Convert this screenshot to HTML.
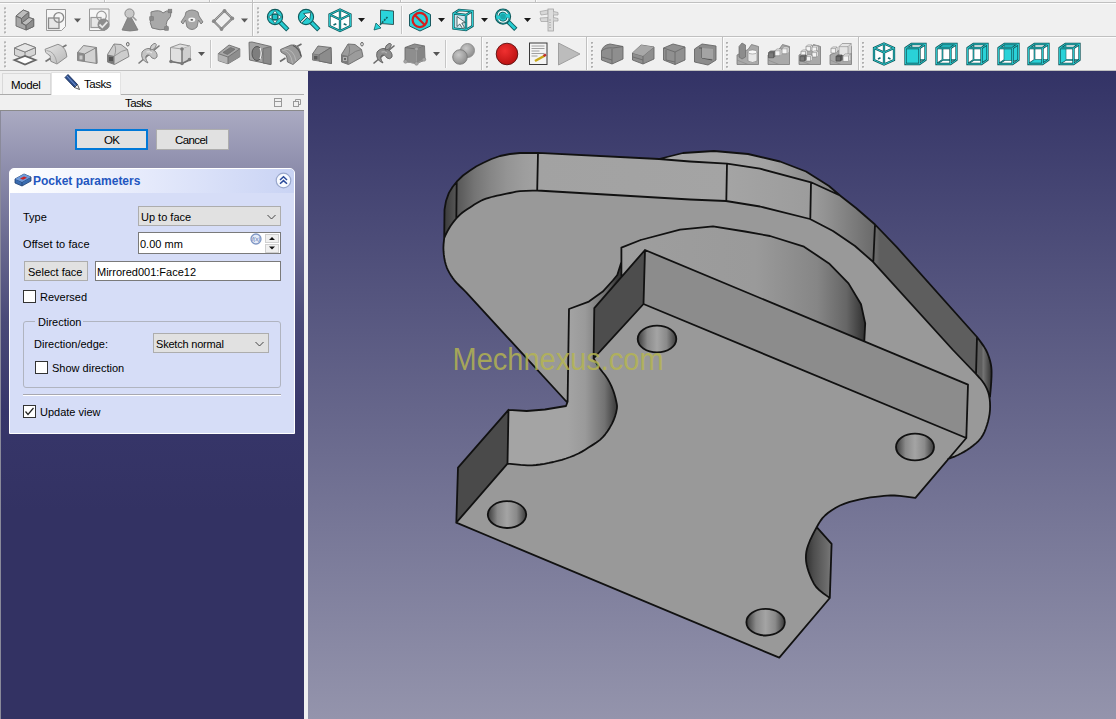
<!DOCTYPE html>
<html><head><meta charset="utf-8">
<style>
*{margin:0;padding:0;box-sizing:border-box}
html,body{width:1116px;height:719px;overflow:hidden;background:#f0f0f0;font-family:"Liberation Sans",sans-serif;font-size:11px;color:#000}
.a{position:absolute}
.hl{position:absolute;height:1px;background:#c4c4c4}
.vl{position:absolute;width:1px;background:#d0d0d0}
.grip{position:absolute;width:3px;background-image:radial-gradient(circle,#9a9a9a 0.8px,transparent 1px);background-size:3px 4px}
.t{position:absolute;white-space:nowrap;line-height:1}
.btn{position:absolute;background:#e1e1e1;border:1px solid #adadad}
.cb{position:absolute;width:13px;height:13px;border:1px solid #333;background:#fff}
</style></head><body>
<!-- toolbar rows -->
<!--TB--><div class="a" style="left:0;top:0;width:1116px;height:71px;background:#f0f0f0"></div><svg class="a" style="left:0;top:0" width="1116" height="71" viewBox="0 0 1116 71"><rect x="0" y="2" width="1116" height="1" fill="#c0c0c0"/><rect x="0" y="3" width="1116" height="1" fill="#fcfcfc"/><rect x="0" y="36" width="1116" height="1" fill="#c0c0c0"/><rect x="0" y="37" width="1116" height="1" fill="#fcfcfc"/><rect x="0" y="70" width="1116" height="1" fill="#c0c0c0"/><rect x="104" y="0" width="1" height="2" fill="#c0c0c0"/><rect x="105" y="0" width="1" height="2" fill="#fcfcfc"/><rect x="209" y="0" width="1" height="2" fill="#c0c0c0"/><rect x="210" y="0" width="1" height="2" fill="#fcfcfc"/><rect x="252" y="0" width="1" height="2" fill="#c0c0c0"/><rect x="253" y="0" width="1" height="2" fill="#fcfcfc"/><rect x="400" y="0" width="1" height="2" fill="#c0c0c0"/><rect x="401" y="0" width="1" height="2" fill="#fcfcfc"/><rect x="535" y="0" width="1" height="2" fill="#c0c0c0"/><rect x="536" y="0" width="1" height="2" fill="#fcfcfc"/><rect x="481" y="37" width="1" height="33" fill="#c0c0c0"/><rect x="482" y="38" width="1" height="32" fill="#fcfcfc"/><rect x="586" y="37" width="1" height="33" fill="#c0c0c0"/><rect x="587" y="38" width="1" height="32" fill="#fcfcfc"/><rect x="722" y="37" width="1" height="33" fill="#c0c0c0"/><rect x="723" y="38" width="1" height="32" fill="#fcfcfc"/><rect x="858" y="37" width="1" height="33" fill="#c0c0c0"/><rect x="859" y="38" width="1" height="32" fill="#fcfcfc"/><rect x="4" y="7.5" width="2" height="2" fill="#bcbcbc"/><rect x="4.5" y="7.5" width="1" height="1" fill="#a0a0a0"/><rect x="5.5" y="9.0" width="1" height="1" fill="#ffffff"/><rect x="4" y="11.5" width="2" height="2" fill="#bcbcbc"/><rect x="4.5" y="11.5" width="1" height="1" fill="#a0a0a0"/><rect x="5.5" y="13.0" width="1" height="1" fill="#ffffff"/><rect x="4" y="15.5" width="2" height="2" fill="#bcbcbc"/><rect x="4.5" y="15.5" width="1" height="1" fill="#a0a0a0"/><rect x="5.5" y="17.0" width="1" height="1" fill="#ffffff"/><rect x="4" y="19.5" width="2" height="2" fill="#bcbcbc"/><rect x="4.5" y="19.5" width="1" height="1" fill="#a0a0a0"/><rect x="5.5" y="21.0" width="1" height="1" fill="#ffffff"/><rect x="4" y="23.5" width="2" height="2" fill="#bcbcbc"/><rect x="4.5" y="23.5" width="1" height="1" fill="#a0a0a0"/><rect x="5.5" y="25.0" width="1" height="1" fill="#ffffff"/><rect x="4" y="27.5" width="2" height="2" fill="#bcbcbc"/><rect x="4.5" y="27.5" width="1" height="1" fill="#a0a0a0"/><rect x="5.5" y="29.0" width="1" height="1" fill="#ffffff"/><rect x="4" y="31.5" width="2" height="2" fill="#bcbcbc"/><rect x="4.5" y="31.5" width="1" height="1" fill="#a0a0a0"/><rect x="5.5" y="33.0" width="1" height="1" fill="#ffffff"/><rect x="4" y="41.5" width="2" height="2" fill="#bcbcbc"/><rect x="4.5" y="41.5" width="1" height="1" fill="#a0a0a0"/><rect x="5.5" y="43.0" width="1" height="1" fill="#ffffff"/><rect x="4" y="45.5" width="2" height="2" fill="#bcbcbc"/><rect x="4.5" y="45.5" width="1" height="1" fill="#a0a0a0"/><rect x="5.5" y="47.0" width="1" height="1" fill="#ffffff"/><rect x="4" y="49.5" width="2" height="2" fill="#bcbcbc"/><rect x="4.5" y="49.5" width="1" height="1" fill="#a0a0a0"/><rect x="5.5" y="51.0" width="1" height="1" fill="#ffffff"/><rect x="4" y="53.5" width="2" height="2" fill="#bcbcbc"/><rect x="4.5" y="53.5" width="1" height="1" fill="#a0a0a0"/><rect x="5.5" y="55.0" width="1" height="1" fill="#ffffff"/><rect x="4" y="57.5" width="2" height="2" fill="#bcbcbc"/><rect x="4.5" y="57.5" width="1" height="1" fill="#a0a0a0"/><rect x="5.5" y="59.0" width="1" height="1" fill="#ffffff"/><rect x="4" y="61.5" width="2" height="2" fill="#bcbcbc"/><rect x="4.5" y="61.5" width="1" height="1" fill="#a0a0a0"/><rect x="5.5" y="63.0" width="1" height="1" fill="#ffffff"/><rect x="4" y="65.5" width="2" height="2" fill="#bcbcbc"/><rect x="4.5" y="65.5" width="1" height="1" fill="#a0a0a0"/><rect x="5.5" y="67.0" width="1" height="1" fill="#ffffff"/><rect x="257" y="7.5" width="2" height="2" fill="#bcbcbc"/><rect x="257.5" y="7.5" width="1" height="1" fill="#a0a0a0"/><rect x="258.5" y="9.0" width="1" height="1" fill="#ffffff"/><rect x="257" y="11.5" width="2" height="2" fill="#bcbcbc"/><rect x="257.5" y="11.5" width="1" height="1" fill="#a0a0a0"/><rect x="258.5" y="13.0" width="1" height="1" fill="#ffffff"/><rect x="257" y="15.5" width="2" height="2" fill="#bcbcbc"/><rect x="257.5" y="15.5" width="1" height="1" fill="#a0a0a0"/><rect x="258.5" y="17.0" width="1" height="1" fill="#ffffff"/><rect x="257" y="19.5" width="2" height="2" fill="#bcbcbc"/><rect x="257.5" y="19.5" width="1" height="1" fill="#a0a0a0"/><rect x="258.5" y="21.0" width="1" height="1" fill="#ffffff"/><rect x="257" y="23.5" width="2" height="2" fill="#bcbcbc"/><rect x="257.5" y="23.5" width="1" height="1" fill="#a0a0a0"/><rect x="258.5" y="25.0" width="1" height="1" fill="#ffffff"/><rect x="257" y="27.5" width="2" height="2" fill="#bcbcbc"/><rect x="257.5" y="27.5" width="1" height="1" fill="#a0a0a0"/><rect x="258.5" y="29.0" width="1" height="1" fill="#ffffff"/><rect x="257" y="31.5" width="2" height="2" fill="#bcbcbc"/><rect x="257.5" y="31.5" width="1" height="1" fill="#a0a0a0"/><rect x="258.5" y="33.0" width="1" height="1" fill="#ffffff"/><rect x="486" y="42.0" width="2" height="2" fill="#bcbcbc"/><rect x="486.5" y="42.0" width="1" height="1" fill="#a0a0a0"/><rect x="487.5" y="43.5" width="1" height="1" fill="#ffffff"/><rect x="486" y="46.0" width="2" height="2" fill="#bcbcbc"/><rect x="486.5" y="46.0" width="1" height="1" fill="#a0a0a0"/><rect x="487.5" y="47.5" width="1" height="1" fill="#ffffff"/><rect x="486" y="50.0" width="2" height="2" fill="#bcbcbc"/><rect x="486.5" y="50.0" width="1" height="1" fill="#a0a0a0"/><rect x="487.5" y="51.5" width="1" height="1" fill="#ffffff"/><rect x="486" y="54.0" width="2" height="2" fill="#bcbcbc"/><rect x="486.5" y="54.0" width="1" height="1" fill="#a0a0a0"/><rect x="487.5" y="55.5" width="1" height="1" fill="#ffffff"/><rect x="486" y="58.0" width="2" height="2" fill="#bcbcbc"/><rect x="486.5" y="58.0" width="1" height="1" fill="#a0a0a0"/><rect x="487.5" y="59.5" width="1" height="1" fill="#ffffff"/><rect x="486" y="62.0" width="2" height="2" fill="#bcbcbc"/><rect x="486.5" y="62.0" width="1" height="1" fill="#a0a0a0"/><rect x="487.5" y="63.5" width="1" height="1" fill="#ffffff"/><rect x="486" y="66.0" width="2" height="2" fill="#bcbcbc"/><rect x="486.5" y="66.0" width="1" height="1" fill="#a0a0a0"/><rect x="487.5" y="67.5" width="1" height="1" fill="#ffffff"/><rect x="591" y="42.0" width="2" height="2" fill="#bcbcbc"/><rect x="591.5" y="42.0" width="1" height="1" fill="#a0a0a0"/><rect x="592.5" y="43.5" width="1" height="1" fill="#ffffff"/><rect x="591" y="46.0" width="2" height="2" fill="#bcbcbc"/><rect x="591.5" y="46.0" width="1" height="1" fill="#a0a0a0"/><rect x="592.5" y="47.5" width="1" height="1" fill="#ffffff"/><rect x="591" y="50.0" width="2" height="2" fill="#bcbcbc"/><rect x="591.5" y="50.0" width="1" height="1" fill="#a0a0a0"/><rect x="592.5" y="51.5" width="1" height="1" fill="#ffffff"/><rect x="591" y="54.0" width="2" height="2" fill="#bcbcbc"/><rect x="591.5" y="54.0" width="1" height="1" fill="#a0a0a0"/><rect x="592.5" y="55.5" width="1" height="1" fill="#ffffff"/><rect x="591" y="58.0" width="2" height="2" fill="#bcbcbc"/><rect x="591.5" y="58.0" width="1" height="1" fill="#a0a0a0"/><rect x="592.5" y="59.5" width="1" height="1" fill="#ffffff"/><rect x="591" y="62.0" width="2" height="2" fill="#bcbcbc"/><rect x="591.5" y="62.0" width="1" height="1" fill="#a0a0a0"/><rect x="592.5" y="63.5" width="1" height="1" fill="#ffffff"/><rect x="591" y="66.0" width="2" height="2" fill="#bcbcbc"/><rect x="591.5" y="66.0" width="1" height="1" fill="#a0a0a0"/><rect x="592.5" y="67.5" width="1" height="1" fill="#ffffff"/><rect x="726" y="42.0" width="2" height="2" fill="#bcbcbc"/><rect x="726.5" y="42.0" width="1" height="1" fill="#a0a0a0"/><rect x="727.5" y="43.5" width="1" height="1" fill="#ffffff"/><rect x="726" y="46.0" width="2" height="2" fill="#bcbcbc"/><rect x="726.5" y="46.0" width="1" height="1" fill="#a0a0a0"/><rect x="727.5" y="47.5" width="1" height="1" fill="#ffffff"/><rect x="726" y="50.0" width="2" height="2" fill="#bcbcbc"/><rect x="726.5" y="50.0" width="1" height="1" fill="#a0a0a0"/><rect x="727.5" y="51.5" width="1" height="1" fill="#ffffff"/><rect x="726" y="54.0" width="2" height="2" fill="#bcbcbc"/><rect x="726.5" y="54.0" width="1" height="1" fill="#a0a0a0"/><rect x="727.5" y="55.5" width="1" height="1" fill="#ffffff"/><rect x="726" y="58.0" width="2" height="2" fill="#bcbcbc"/><rect x="726.5" y="58.0" width="1" height="1" fill="#a0a0a0"/><rect x="727.5" y="59.5" width="1" height="1" fill="#ffffff"/><rect x="726" y="62.0" width="2" height="2" fill="#bcbcbc"/><rect x="726.5" y="62.0" width="1" height="1" fill="#a0a0a0"/><rect x="727.5" y="63.5" width="1" height="1" fill="#ffffff"/><rect x="726" y="66.0" width="2" height="2" fill="#bcbcbc"/><rect x="726.5" y="66.0" width="1" height="1" fill="#a0a0a0"/><rect x="727.5" y="67.5" width="1" height="1" fill="#ffffff"/><rect x="862" y="42.0" width="2" height="2" fill="#bcbcbc"/><rect x="862.5" y="42.0" width="1" height="1" fill="#a0a0a0"/><rect x="863.5" y="43.5" width="1" height="1" fill="#ffffff"/><rect x="862" y="46.0" width="2" height="2" fill="#bcbcbc"/><rect x="862.5" y="46.0" width="1" height="1" fill="#a0a0a0"/><rect x="863.5" y="47.5" width="1" height="1" fill="#ffffff"/><rect x="862" y="50.0" width="2" height="2" fill="#bcbcbc"/><rect x="862.5" y="50.0" width="1" height="1" fill="#a0a0a0"/><rect x="863.5" y="51.5" width="1" height="1" fill="#ffffff"/><rect x="862" y="54.0" width="2" height="2" fill="#bcbcbc"/><rect x="862.5" y="54.0" width="1" height="1" fill="#a0a0a0"/><rect x="863.5" y="55.5" width="1" height="1" fill="#ffffff"/><rect x="862" y="58.0" width="2" height="2" fill="#bcbcbc"/><rect x="862.5" y="58.0" width="1" height="1" fill="#a0a0a0"/><rect x="863.5" y="59.5" width="1" height="1" fill="#ffffff"/><rect x="862" y="62.0" width="2" height="2" fill="#bcbcbc"/><rect x="862.5" y="62.0" width="1" height="1" fill="#a0a0a0"/><rect x="863.5" y="63.5" width="1" height="1" fill="#ffffff"/><rect x="862" y="66.0" width="2" height="2" fill="#bcbcbc"/><rect x="862.5" y="66.0" width="1" height="1" fill="#a0a0a0"/><rect x="863.5" y="67.5" width="1" height="1" fill="#ffffff"/><rect x="252" y="3" width="1" height="33" fill="#c0c0c0"/><rect x="253" y="4" width="1" height="32" fill="#fcfcfc"/><rect x="401" y="6" width="1" height="28" fill="#c6c6c6"/><rect x="402" y="6" width="1" height="28" fill="#fbfbfb"/><rect x="210" y="40" width="1" height="28" fill="#c6c6c6"/><rect x="211" y="40" width="1" height="28" fill="#fbfbfb"/><rect x="445" y="40" width="1" height="28" fill="#c6c6c6"/><rect x="446" y="40" width="1" height="28" fill="#fbfbfb"/><g stroke="#6a6a6a" stroke-width="0.9" stroke-linejoin="round"><path d="M16,16 L23.2,10 L28.8,12.2 L28.8,17.5 L33.7,19 L33.7,26.5 L26,30 L16,26 Z" fill="#a6a6a6"/><path d="M16,16 L23.2,10 L28.8,12.2 L21.5,18.5 Z" fill="#bcbcbc"/><path d="M21.5,23 L28.8,17.5 L33.7,19 L26,25.5 Z" fill="#bcbcbc"/><path d="M21.5,18.5 L28.8,12.2 L28.8,17.5 L21.5,23 Z" fill="#8c8c8c"/><path d="M26,25.5 L33.7,19 L33.7,26.5 L26,30 Z" fill="#8e8e8e"/><path d="M16,16 L21.5,18.5 L21.5,23 L26,25.5 L26,30" fill="none"/></g><path d="M46.5,9.5 h19 v17 l-4,4 h-15 z" fill="#f6f6f6" stroke="#9a9a9a" stroke-width="1"/><rect x="48.5" y="18" width="10.5" height="10.5" fill="#e6e6e6" stroke="#8a8a8a" stroke-width="1.3"/><circle cx="58.8" cy="17.5" r="4.9" fill="none" stroke="#8a8a8a" stroke-width="1.3"/><path d="M74,18.5 h7 l-3.5,4 z" fill="#5a5a5a"/><path d="M89.5,9 h19.5 v17.5 l-4,4 h-15.5 z" fill="#f6f6f6" stroke="#9a9a9a" stroke-width="1"/><rect x="91" y="17.5" width="10" height="10" fill="#e6e6e6" stroke="#9a9a9a" stroke-width="1.2"/><circle cx="101.5" cy="16" r="4.8" fill="none" stroke="#9a9a9a" stroke-width="1.2"/><circle cx="103.5" cy="24.5" r="6" fill="#8e8e8e"/><path d="M99.5,24.5 l2.8,2.8 l5,-5.5" fill="none" stroke="#e8e8e8" stroke-width="1.8"/><path d="M122,30 Q130,32 138,30 L131,17 L128,17 Z" fill="#8a8a8a" stroke="#777" stroke-width="0.8"/><circle cx="129.5" cy="13.5" r="4.6" fill="#c8c8c8" stroke="#8a8a8a" stroke-width="1"/><path d="M132.5,16.5 L136.5,20.5" stroke="#9a9a9a" stroke-width="1.6"/><path d="M151,12 Q160,9 163,13 Q166,10 171,11 Q172,17 167,21 Q165,24 168,29 Q160,31 152,28 Q149,22 151,18 Z" fill="#a9a9a9" stroke="#7c7c7c" stroke-width="1"/><rect x="168.2" y="9.2" width="3.6" height="3.6" fill="#8a8a8a" stroke="#777" stroke-width="0.6"/><rect x="149.7" y="16.7" width="3.6" height="3.6" fill="#8a8a8a" stroke="#777" stroke-width="0.6"/><rect x="164.7" y="26.7" width="3.6" height="3.6" fill="#8a8a8a" stroke="#777" stroke-width="0.6"/><path d="M186,12 Q192,8 198,12 L199,16 L203,22 L201,24 L198.5,20 L197,27 Q192,32 187,27 L185.5,20 L183,24 L181,22 L185,16 Z" fill="#a8a8a8" stroke="#7a7a7a" stroke-width="0.9"/><ellipse cx="191.8" cy="19.8" rx="3.5" ry="2.2" fill="#f4f4f4"/><ellipse cx="191.8" cy="19.8" rx="1.4" ry="0.9" fill="#555"/><path d="M224.5,10.8 L232.3,18.4 L221.5,29 L213.8,21.2 Z" fill="none" stroke="#7a7a7a" stroke-width="2.2"/><path d="M224.5,10.8 L232.3,18.4 L221.5,29 L213.8,21.2 Z" fill="none" stroke="#e0e0e0" stroke-width="0.6"/><circle cx="224.5" cy="10.8" r="1.9" fill="#8a8a8a"/><circle cx="232.3" cy="18.4" r="1.9" fill="#8a8a8a"/><circle cx="221.5" cy="29" r="1.9" fill="#8a8a8a"/><circle cx="213.8" cy="21.2" r="1.9" fill="#8a8a8a"/><path d="M241,18.5 h7 l-3.5,4 z" fill="#5a5a5a"/><path d="M280,22 L287.8,29.8" stroke="#0f5a5c" stroke-width="4.6" stroke-linecap="butt"/><path d="M280,22 L287.2,29.2" stroke="#26cdd2" stroke-width="2.8" stroke-linecap="butt"/><circle cx="275" cy="17" r="7.6" fill="#26cdd2" stroke="#0f5a5c" stroke-width="1.1"/><path d="M275,10.5 L277.3,13.8 L272.7,13.8 Z M275,23.5 L277.3,20.2 L272.7,20.2 Z M268.5,17 L271.8,14.7 L271.8,19.3 Z M281.5,17 L278.2,14.7 L278.2,19.3 Z" fill="#fff" stroke="#0f4a4c" stroke-width="0.7" stroke-linejoin="round"/><rect x="272.6" y="14.6" width="4.8" height="4.8" fill="#22c4c8" stroke="#0f4a4c" stroke-width="0.7"/><path d="M311,22 L318.8,29.8" stroke="#0f5a5c" stroke-width="4.6" stroke-linecap="butt"/><path d="M311,22 L318.2,29.2" stroke="#26cdd2" stroke-width="2.8" stroke-linecap="butt"/><circle cx="306" cy="17" r="7.6" fill="#26cdd2" stroke="#0f5a5c" stroke-width="1.1"/><path d="M301.5,21.8 L307,16.3" stroke="#0f4a4c" stroke-width="2.6" stroke-linecap="round"/><path d="M301.5,21.8 L307,16.3" stroke="#fff" stroke-width="1.2" stroke-linecap="round"/><path d="M310.8,12.5 L303.6,13.6 L309.7,19.7 Z" fill="#fff" stroke="#0f4a4c" stroke-width="0.8" stroke-linejoin="round"/><path d="M340,9.5 L350.5,14.5 L350.5,26 L340,31 L329.5,26 L329.5,14.5 Z" fill="#fff"/><path d="M340,9.5 L350.5,14.5 L350.5,26 L340,31 L329.5,26 L329.5,14.5 Z M329.5,14.5 L340,19.5 L350.5,14.5 M340,10 L340,30.5" fill="none" stroke="#0f5558" stroke-width="2.3" stroke-linejoin="miter"/><path d="M340,9.5 L350.5,14.5 L350.5,26 L340,31 L329.5,26 L329.5,14.5 Z M329.5,14.5 L340,19.5 L350.5,14.5 M340,10 L340,30.5" fill="none" stroke="#2cd0d6" stroke-width="0.9" stroke-linejoin="miter"/><path d="M333.5,25 l2.8,-1.3 M343.7,23.7 l2.8,1.3" stroke="#136a6e" stroke-width="1.6"/><path d="M358,18 h7 l-3.5,4 z" fill="#1a1a1a"/><path d="M380.5,10 L393.5,11 L393.5,24.5 L380.5,23.5 Z" fill="#2ad4da" stroke="#2a4a4a" stroke-width="0.9"/><path d="M387.5,17 L378,27" stroke="#106060" stroke-width="1.6" stroke-dasharray="2,1"/><path d="M374,30 L376,23 L381,28 Z" fill="#2ad4da" stroke="#106060" stroke-width="0.8"/><path d="M420,9 L430.5,14.5 L430.5,26 L420,31 L409.5,26 L409.5,14.5 Z" fill="#2fd3da" stroke="#1a5a60" stroke-width="1"/><circle cx="419.8" cy="20" r="7.2" fill="none" stroke="#d81c1c" stroke-width="2.2"/><path d="M414.8,15 L424.8,25" stroke="#d81c1c" stroke-width="2.2"/><path d="M438,18 h7 l-3.5,4 z" fill="#1a1a1a"/><path d="M453.5,13.5 L459,10 L472.5,11 L472.5,26 L466,30 L453.5,28.5 Z" fill="#f4f4f4"/><path d="M455,15 L464.5,16 L464.5,28.5 L455,27.5 Z" fill="#cfe6f0"/><path d="M453.5,13.5 L459,10 L472.5,11 L472.5,26 L466,30 L453.5,28.5 Z M453.5,13.5 L466,15 L472.5,11 M466,15 L466,30" fill="none" stroke="#0f5558" stroke-width="2.4" stroke-linejoin="miter"/><path d="M453.5,13.5 L459,10 L472.5,11 L472.5,26 L466,30 L453.5,28.5 Z M453.5,13.5 L466,15 L472.5,11 M466,15 L466,30" fill="none" stroke="#2cd0d6" stroke-width="1.0" stroke-linejoin="miter"/><path d="M457,16.5 L457,26.5 L459.8,24 L462.5,28.5 L464.5,27.5 L461.8,23 L465.5,22.5 Z" fill="#f8f8f8" stroke="#2a4a4a" stroke-width="0.8"/><path d="M481,18 h7 l-3.5,4 z" fill="#1a1a1a"/><path d="M508,21.6 L515.8,29.400000000000002" stroke="#0f5a5c" stroke-width="4.6" stroke-linecap="butt"/><path d="M508,21.6 L515.2,28.8" stroke="#26cdd2" stroke-width="2.8" stroke-linecap="butt"/><circle cx="503" cy="16.6" r="7.6" fill="#26cdd2" stroke="#0f5a5c" stroke-width="1.1"/><path d="M498,15.5 A5,5 0 0 1 507.5,14" fill="none" stroke="#0f4a4c" stroke-width="2.6"/><path d="M498,15.5 A5,5 0 0 1 507.5,14" fill="none" stroke="#e8ffff" stroke-width="1.3"/><path d="M508,17.8 A5,5 0 0 1 498.5,19.2" fill="none" stroke="#0f4a4c" stroke-width="2.6"/><path d="M508,17.8 A5,5 0 0 1 498.5,19.2" fill="none" stroke="#e8ffff" stroke-width="1.3"/><circle cx="503" cy="16.6" r="2.8" fill="#1aa8ac"/><path d="M524,18 h7 l-3.5,4 z" fill="#1a1a1a"/><path d="M540,11.5 L548,10 L548,14 L541,15 Z M540,18 L548,17.5 L548,21.5 L541,21.5 Z" fill="#d8d8d8" stroke="#a8a8a8" stroke-width="0.8" stroke-linejoin="round"/><rect x="548" y="9" width="5.5" height="22" fill="#dcdcdc" stroke="#a4a4a4" stroke-width="0.8"/><path d="M553.5,11.5 L558,12.5 L558,15 L553.5,15 M553.5,17.5 L558,18.5 L558,21 L553.5,21" fill="#d8d8d8" stroke="#a8a8a8" stroke-width="0.8"/><path d="M549,20 h2 M549,22.5 h2 M549,25 h2 M549,27.5 h2" stroke="#999" stroke-width="0.6"/><path d="M14.5,48 L25,43.5 L35.5,47.5 L35.5,54.5 L25,59 L14.5,55 Z" fill="#d6d6d6" stroke="#7a7a7a" stroke-width="0.9"/><path d="M14.5,48 L25,52 L35.5,47.5 M25,52 L25,59" fill="none" stroke="#7a7a7a" stroke-width="0.9"/><path d="M14.5,48 L25,43.5 L35.5,47.5 L25,52 Z" fill="#e6e6e6" stroke="#7a7a7a" stroke-width="0.9"/><path d="M14.5,60 L25,56 L35.5,60 L25,64.5 Z" fill="#ffffff" stroke="#666" stroke-width="1.8"/><defs><linearGradient id="gr1" x1="0" y1="0" x2="1" y2="1"><stop offset="0" stop-color="#e6e6e6"/><stop offset="1" stop-color="#b8b8b8"/></linearGradient></defs><path d="M45.5,61.5 L51,58 M62,47.5 L66.5,45" stroke="#777" stroke-width="1.8"/><path d="M45,49.3 L57.9,44.3 Q64,46 66,52.3 L66.9,56.8 L57,64 L50.8,61.3 Q50,57 50.3,55.9 Q47,54 45.8,52.3 Z" fill="url(#gr1)" stroke="#858585" stroke-width="0.9" stroke-linejoin="round"/><path d="M46.5,50.5 Q55,51 57,63.5" fill="none" stroke="#999" stroke-width="0.8"/><path d="M77.5,52.5 L83.5,45.5 L96.5,47.5 L97,63.5 L84.5,61.5 L77.5,60.5 Z" fill="#d2d2d2" stroke="#7c7c7c" stroke-width="0.9" stroke-linejoin="round"/><path d="M77.5,52.5 L84.5,54 L96.5,47.5 M84.5,54 L84.5,61.5" fill="none" stroke="#7c7c7c" stroke-width="0.9"/><path d="M77.5,52.5 L84.5,54 L84.5,61.5 L77.5,60.5 Z" fill="#8a8a8a"/><rect x="79.5" y="55.5" width="3" height="4" fill="#c8c8c8"/><path d="M96,47.5 L96.5,63" stroke="#888" stroke-width="1.8"/><path d="M107.5,54.5 L114,44 L121,44.5 L127.5,49.5 L129,56.5 L114.5,64.5 L107.5,62 Z" fill="#cdcdcd" stroke="#7c7c7c" stroke-width="0.9" stroke-linejoin="round"/><path d="M107.5,54.5 L114.5,56 L114.5,64.5 L107.5,62 Z" fill="#7a7a7a"/><rect x="109" y="57" width="4" height="4" fill="#555"/><path d="M114.5,56 Q117,48 114,44 M114.5,56 Q122,50 127.5,49.5" fill="none" stroke="#8a8a8a" stroke-width="0.8"/><ellipse cx="127.8" cy="44.2" rx="1.3" ry="1.8" fill="none" stroke="#555" stroke-width="0.9"/><path d="M138.5,63.5 L159.5,45.5" stroke="#7a7a7a" stroke-width="1.6"/><path d="M148,63 Q140,60 142,52 Q146,47 152,49 Q158,52 157,57 Q155,60 152,58 Q150,54 147,55 Q144,57 148,63 Z" fill="#c4c4c4" stroke="#7a7a7a" stroke-width="0.9"/><path d="M150,50 Q150,45 154,43.5 Q158,43 155,48 Q153,50 150,50 Z" fill="#cfcfcf" stroke="#7a7a7a" stroke-width="0.9"/><path d="M146.5,52 Q150,51 152,53" fill="none" stroke="#eee" stroke-width="1"/><path d="M170.5,47.5 L180,44 L190,46 L190.5,60 L182,63.5 L170.5,61.5 Z" fill="#e0e0e0" stroke="#8a8a8a" stroke-width="0.9" stroke-linejoin="round"/><path d="M170.5,47.5 L182,49 L190,46" fill="none" stroke="#9a9a9a" stroke-width="0.9"/><path d="M182,49 L190,46 L190.5,60 L182,63.5 Z" fill="#d0d0d0"/><path d="M182,49 L182,63.5 L170.5,61.5 M182,63.5 L190,59.5" fill="none" stroke="#707070" stroke-width="1.4"/><circle cx="182" cy="49" r="1.8" fill="#7a7a7a"/><circle cx="182" cy="63.5" r="1.8" fill="#7a7a7a"/><circle cx="171" cy="61.5" r="1.8" fill="#7a7a7a"/><circle cx="189.5" cy="59.5" r="1.8" fill="#7a7a7a"/><path d="M198,52 h7 l-3.5,4 z" fill="#555"/><path d="M218.3,53.6 L229,45 L239.8,48.8 L239.8,56.8 L228,63.8 L218.3,60.6 Z" fill="#a8a8a8" stroke="#6e6e6e" stroke-width="0.9" stroke-linejoin="round"/><path d="M218.3,53.6 L228,57 L228,63.8 L218.3,60.6 Z" fill="#b4b4b4"/><path d="M228,57 L239.8,48.8 L239.8,56.8 L228,63.8 Z" fill="#8e8e8e"/><path d="M218.3,53.6 L228,57 L239.8,48.8 M228,57 L228,63.8" fill="none" stroke="#6e6e6e" stroke-width="0.9"/><path d="M223,52.5 L230.5,47.5 L235,49.2 L227.5,54.5 Z" fill="#7a7a7a" stroke="#6e6e6e" stroke-width="0.8"/><path d="M249,42.3 L252,42 L271,46.5 L271,64.5 L249.5,60 Z" fill="#a4a4a4" stroke="#6a6a6a" stroke-width="0.9" stroke-linejoin="round"/><path d="M263,48.5 L271,46.5 L271,64.5 L263,63 Z" fill="#8a8a8a" stroke="#6a6a6a" stroke-width="0.8"/><ellipse cx="257" cy="53.5" rx="5" ry="7" fill="#7e7e7e" stroke="#555" stroke-width="1"/><path d="M260,48 Q262.5,53 260,59" fill="none" stroke="#f0f0f0" stroke-width="1.3"/><path d="M280,61.5 L285.5,58 M297,46.5 L301.5,44" stroke="#6a6a6a" stroke-width="1.6"/><path d="M280.5,49.5 L291,45 Q298,44 300,51 L301.5,57 L293,64.5 L287.5,62 Q287,57 286,55 Q282,53 281,52 Z" fill="#9a9a9a" stroke="#6a6a6a" stroke-width="0.9" stroke-linejoin="round"/><path d="M282,50 Q291,51 292.5,63.5 M284,49 Q294,49 296,61" fill="none" stroke="#bdbdbd" stroke-width="0.8"/><path d="M293,45.5 Q299,48 301,56" fill="none" stroke="#555" stroke-width="1.2"/><path d="M312.5,54 L318,46 L331,47.5 L331.5,63.5 L319,61 L312.5,60 Z" fill="#a0a0a0" stroke="#6a6a6a" stroke-width="0.9" stroke-linejoin="round"/><path d="M312.5,54 L319,55 L331,47.5 M319,55 L319,61" fill="none" stroke="#6a6a6a" stroke-width="0.9"/><path d="M312.5,54 L319,55 L319,61 L312.5,60 Z" fill="#8a8a8a"/><rect x="314" y="56" width="3.5" height="3.5" fill="#5a5a5a"/><path d="M319,55 L331,47.5 L331.5,63.5 L319,61 Z" fill="#8c8c8c" stroke="#6a6a6a" stroke-width="0.8"/><path d="M341.5,54.5 L348,44 L355,44.5 L361.5,49.5 L363,56.5 L348.5,64.5 L341.5,62 Z" fill="#9c9c9c" stroke="#6a6a6a" stroke-width="0.9" stroke-linejoin="round"/><path d="M341.5,54.5 L348.5,56 L348.5,64.5 L341.5,62 Z" fill="#7a7a7a"/><rect x="343" y="57" width="4" height="4" fill="#b0b0b0"/><rect x="344" y="58" width="2" height="2" fill="#666"/><path d="M348.5,56 Q351,48 348,44 M348.5,56 Q356,50 361.5,49.5" fill="none" stroke="#777" stroke-width="0.8"/><ellipse cx="362" cy="44.2" rx="1.3" ry="1.8" fill="none" stroke="#555" stroke-width="0.9"/><path d="M373.5,63.5 L394.5,45.5" stroke="#6a6a6a" stroke-width="1.6"/><path d="M383,63 Q375,60 377,52 Q381,47 387,49 Q393,52 392,57 Q390,60 387,58 Q385,54 382,55 Q379,57 383,63 Z" fill="#8e8e8e" stroke="#5e5e5e" stroke-width="0.9"/><path d="M385,50 Q385,45 389,43.5 Q393,43 390,48 Q388,50 385,50 Z" fill="#9a9a9a" stroke="#5e5e5e" stroke-width="0.9"/><path d="M381.5,52 Q385,51 387,53" fill="none" stroke="#bbb" stroke-width="1"/><path d="M405,47.5 L414.5,44 L424.5,46 L425,60 L416.5,63.5 L405,61.5 Z" fill="#8e8e8e" stroke="#6a6a6a" stroke-width="0.9" stroke-linejoin="round"/><path d="M405,47.5 L416.5,49 L424.5,46" fill="none" stroke="#6a6a6a" stroke-width="0.9"/><path d="M416.5,49 L424.5,46 L425,60 L416.5,63.5 Z" fill="#858585"/><path d="M416.5,49 L416.5,63.5 L405,61.5 M416.5,63.5 L424.5,59.5" fill="none" stroke="#9a9a9a" stroke-width="1.1"/><circle cx="416.5" cy="49" r="1.8" fill="#a6a6a6" stroke="#808080" stroke-width="0.5"/><circle cx="416.5" cy="63.5" r="1.8" fill="#a6a6a6" stroke="#808080" stroke-width="0.5"/><circle cx="405.5" cy="61.5" r="1.8" fill="#a6a6a6" stroke="#808080" stroke-width="0.5"/><circle cx="424" cy="59.5" r="1.8" fill="#a6a6a6" stroke="#808080" stroke-width="0.5"/><path d="M433,52 h7 l-3.5,4 z" fill="#555"/><defs><radialGradient id="gsph" cx="0.4" cy="0.35" r="0.7"><stop offset="0" stop-color="#c8c8c8"/><stop offset="1" stop-color="#8a8a8a"/></radialGradient></defs><circle cx="467.5" cy="50.5" r="7" fill="url(#gsph)" stroke="#8a8a8a" stroke-width="0.9"/><circle cx="460" cy="57" r="7.3" fill="url(#gsph)" stroke="#7a7a7a" stroke-width="0.9"/><defs><radialGradient id="rg" cx="0.4" cy="0.35" r="0.7"><stop offset="0" stop-color="#f03030"/><stop offset="1" stop-color="#b81010"/></radialGradient></defs><circle cx="507" cy="54" r="10.8" fill="url(#rg)" stroke="#5a1010" stroke-width="0.9"/><rect x="529.5" y="43" width="17.5" height="21.5" fill="#f4f4f4" stroke="#3a3a3a" stroke-width="1"/><path d="M531.5,46 h13 M531.5,48.5 h13 M531.5,51 h8 M531.5,53.5 h13 M531.5,56 h6" stroke="#8a8a8a" stroke-width="0.8"/><path d="M535,61 L545,55.5" stroke="#c8a818" stroke-width="2.5"/><path d="M543.5,56 L546,54.5" stroke="#c03030" stroke-width="2.5"/><path d="M558.5,43 L580,54 L558.5,65 Z" fill="#bcbcbc" stroke="#9a9a9a" stroke-width="0.9"/><path d="M601.5,51 Q603,45 610,44 L623,46.5 L623,59 L612,64 L601.5,60 Z" fill="#8e8e8e" stroke="#666" stroke-width="0.9"/><path d="M601.5,51 Q606,47 613,48 L623,46.5 M612,49 L612,64 M602,57 L612,60" fill="none" stroke="#666" stroke-width="0.8"/><path d="M632.5,53 L641,45 L654,47 L654,59 L643,64 L632.5,60 Z" fill="#8e8e8e" stroke="#666" stroke-width="0.9"/><path d="M632.5,53 L643,56 L654,47 M643,56 L643,64 M633,57 L643,60" fill="none" stroke="#666" stroke-width="0.8"/><path d="M632.5,53 L641,45 L654,47 L643,56 Z" fill="#a8a8a8"/><path d="M663.5,48 L673,44 L685,47 L685,60 L675,64.5 L663.5,60 Z" fill="#909090" stroke="#666" stroke-width="0.9"/><path d="M663.5,48 L675,52 L685,47 M675,52 L675,64.5 M666,50 L666,60 M666,60 L675,62" fill="none" stroke="#666" stroke-width="0.8"/><path d="M694.5,49 L702,44 L716,46 L716,60 L708,65 L694.5,62 Z" fill="#8c8c8c" stroke="#666" stroke-width="0.9"/><path d="M699,48 L702,48 L702,58 L712,60" fill="none" stroke="#555" stroke-width="1"/><path d="M702,48 L713,49 L713,59 L702,58Z" fill="#a4a4a4"/><path d="M737,55 L748,49.5 L751.5,44.5 L758.5,46.5 L758.5,64.5 L737,64.5 Z" fill="#a9a9a9" stroke="#7a7a7a" stroke-width="0.8" stroke-linejoin="round"/><path d="M737,60 L748,64.5" stroke="#8a8a8a" stroke-width="0.7"/><path d="M739,46.5 L742,43 L745.5,45 L745.5,57 L742,59 L739,57 Z" fill="#8c8c8c" stroke="#6a6a6a" stroke-width="0.7"/><path d="M748,52 Q752.5,48.5 757,52 L757,61 Q752.5,64 748,61 Z" fill="#e8e8e8" stroke="#888" stroke-width="0.7"/><ellipse cx="752.5" cy="52" rx="4.5" ry="2" fill="#f8f8f8" stroke="#888" stroke-width="0.6"/><path d="M768,55 L779,49.5 L782.5,44.5 L789.5,46.5 L789.5,64.5 L768,64.5 Z" fill="#a9a9a9" stroke="#7a7a7a" stroke-width="0.8" stroke-linejoin="round"/><path d="M768,60 L779,64.5" stroke="#8a8a8a" stroke-width="0.7"/><path d="M768.5,52.75 L770.25,51 L775.25,51 L775.25,56 L773.5,57.75 L768.5,57.75 Z" fill="#7a7a7a" stroke="#555" stroke-width="0.7"/><path d="M773.5,52.75 L775.25,51 L775.25,56 L773.5,57.75 Z" fill="#666"/><path d="M768.5,52.75 L773.5,52.75 L775.25,51 M773.5,52.75 L773.5,57.75" fill="none" stroke="#555" stroke-width="0.6"/><path d="M775,50.75 L776.75,49 L781.75,49 L781.75,54 L780,55.75 L775,55.75 Z" fill="#f4f4f4" stroke="#888" stroke-width="0.7"/><path d="M780,50.75 L781.75,49 L781.75,54 L780,55.75 Z" fill="#d8d8d8"/><path d="M775,50.75 L780,50.75 L781.75,49 M780,50.75 L780,55.75" fill="none" stroke="#888" stroke-width="0.6"/><path d="M782,48.75 L783.75,47 L788.75,47 L788.75,52 L787,53.75 L782,53.75 Z" fill="#f4f4f4" stroke="#888" stroke-width="0.7"/><path d="M787,48.75 L788.75,47 L788.75,52 L787,53.75 Z" fill="#d8d8d8"/><path d="M782,48.75 L787,48.75 L788.75,47 M787,48.75 L787,53.75" fill="none" stroke="#888" stroke-width="0.6"/><path d="M799,55 L810,49.5 L813.5,44.5 L820.5,46.5 L820.5,64.5 L799,64.5 Z" fill="#a9a9a9" stroke="#7a7a7a" stroke-width="0.8" stroke-linejoin="round"/><path d="M799,60 L810,64.5" stroke="#8a8a8a" stroke-width="0.7"/><path d="M806,46.575 L807.575,45 L812.075,45 L812.075,49.5 L810.5,51.075 L806,51.075 Z" fill="#f4f4f4" stroke="#888" stroke-width="0.7"/><path d="M810.5,46.575 L812.075,45 L812.075,49.5 L810.5,51.075 Z" fill="#d8d8d8"/><path d="M806,46.575 L810.5,46.575 L812.075,45 M810.5,46.575 L810.5,51.075" fill="none" stroke="#888" stroke-width="0.6"/><path d="M812,47.075 L813.575,45.5 L818.075,45.5 L818.075,50.0 L816.5,51.575 L812,51.575 Z" fill="#f4f4f4" stroke="#888" stroke-width="0.7"/><path d="M816.5,47.075 L818.075,45.5 L818.075,50.0 L816.5,51.575 Z" fill="#d8d8d8"/><path d="M812,47.075 L816.5,47.075 L818.075,45.5 M816.5,47.075 L816.5,51.575" fill="none" stroke="#888" stroke-width="0.6"/><path d="M801,51.575 L802.575,50 L807.075,50 L807.075,54.5 L805.5,56.075 L801,56.075 Z" fill="#f4f4f4" stroke="#888" stroke-width="0.7"/><path d="M805.5,51.575 L807.075,50 L807.075,54.5 L805.5,56.075 Z" fill="#d8d8d8"/><path d="M801,51.575 L805.5,51.575 L807.075,50 M805.5,51.575 L805.5,56.075" fill="none" stroke="#888" stroke-width="0.6"/><path d="M812,52.575 L813.575,51 L818.075,51 L818.075,55.5 L816.5,57.075 L812,57.075 Z" fill="#f4f4f4" stroke="#888" stroke-width="0.7"/><path d="M816.5,52.575 L818.075,51 L818.075,55.5 L816.5,57.075 Z" fill="#d8d8d8"/><path d="M812,52.575 L816.5,52.575 L818.075,51 M816.5,52.575 L816.5,57.075" fill="none" stroke="#888" stroke-width="0.6"/><path d="M806,56.575 L807.575,55 L812.075,55 L812.075,59.5 L810.5,61.075 L806,61.075 Z" fill="#f4f4f4" stroke="#888" stroke-width="0.7"/><path d="M810.5,56.575 L812.075,55 L812.075,59.5 L810.5,61.075 Z" fill="#d8d8d8"/><path d="M806,56.575 L810.5,56.575 L812.075,55 M810.5,56.575 L810.5,61.075" fill="none" stroke="#888" stroke-width="0.6"/><path d="M800,56.575 L801.575,55 L806.075,55 L806.075,59.5 L804.5,61.075 L800,61.075 Z" fill="#7a7a7a" stroke="#555" stroke-width="0.7"/><path d="M804.5,56.575 L806.075,55 L806.075,59.5 L804.5,61.075 Z" fill="#666"/><path d="M800,56.575 L804.5,56.575 L806.075,55 M804.5,56.575 L804.5,61.075" fill="none" stroke="#555" stroke-width="0.6"/><path d="M830,55 L841,49.5 L844.5,44.5 L851.5,46.5 L851.5,64.5 L830,64.5 Z" fill="#a9a9a9" stroke="#7a7a7a" stroke-width="0.8" stroke-linejoin="round"/><path d="M830,60 L841,64.5" stroke="#8a8a8a" stroke-width="0.7"/><path d="M839,46.65 L842.15,43.5 L851.15,43.5 L851.15,52.5 L848,55.65 L839,55.65 Z" fill="#e4e4e4" stroke="#888" stroke-width="0.7"/><path d="M848,46.65 L851.15,43.5 L851.15,52.5 L848,55.65 Z" fill="#d0d0d0"/><path d="M839,46.65 L848,46.65 L851.15,43.5 M848,46.65 L848,55.65" fill="none" stroke="#888" stroke-width="0.6"/><path d="M831,48.575 L832.575,47 L837.075,47 L837.075,51.5 L835.5,53.075 L831,53.075 Z" fill="#f4f4f4" stroke="#888" stroke-width="0.7"/><path d="M835.5,48.575 L837.075,47 L837.075,51.5 L835.5,53.075 Z" fill="#d8d8d8"/><path d="M831,48.575 L835.5,48.575 L837.075,47 M835.5,48.575 L835.5,53.075" fill="none" stroke="#888" stroke-width="0.6"/><path d="M843,55.925 L844.925,54 L850.425,54 L850.425,59.5 L848.5,61.425 L843,61.425 Z" fill="#f4f4f4" stroke="#888" stroke-width="0.7"/><path d="M848.5,55.925 L850.425,54 L850.425,59.5 L848.5,61.425 Z" fill="#d8d8d8"/><path d="M843,55.925 L848.5,55.925 L850.425,54 M848.5,55.925 L848.5,61.425" fill="none" stroke="#888" stroke-width="0.6"/><path d="M836,56.575 L837.575,55 L842.075,55 L842.075,59.5 L840.5,61.075 L836,61.075 Z" fill="#6a6a6a" stroke="#444" stroke-width="0.7"/><path d="M840.5,56.575 L842.075,55 L842.075,59.5 L840.5,61.075 Z" fill="#555"/><path d="M836,56.575 L840.5,56.575 L842.075,55 M840.5,56.575 L840.5,61.075" fill="none" stroke="#444" stroke-width="0.6"/><path d="M884,43.5 L894,48 L894,60 L884,64.5 L874,60 L874,48 Z" fill="#fff"/><path d="M884,43.5 L894,48 L894,60 L884,64.5 L874,60 L874,48 Z M874,48 L884,52.5 L894,48 M884,44 L884,64" fill="none" stroke="#0f5558" stroke-width="2.3" stroke-linejoin="miter"/><path d="M884,43.5 L894,48 L894,60 L884,64.5 L874,60 L874,48 Z M874,48 L884,52.5 L894,48 M884,44 L884,64" fill="none" stroke="#2cd0d6" stroke-width="0.9" stroke-linejoin="miter"/><path d="M878,59 l2.5,-1.2 M888,57.8 l2.5,1.2" stroke="#136a6e" stroke-width="1.6"/><path d="M905.5,48 L911.5,44 L925.5,44 L925.5,60 L919.5,64 L905.5,64 Z" fill="#fff"/><path d="M911.5,44 L911.5,60 L925.5,60 M911.5,60 L905.5,64" fill="none" stroke="#0f5558" stroke-width="1.6" stroke-linejoin="miter"/><path d="M911.5,44 L911.5,60 L925.5,60 M911.5,60 L905.5,64" fill="none" stroke="#2cd0d6" stroke-width="0.5" stroke-linejoin="miter"/><path d="M905.5,48 L919.5,48 L919.5,64 L905.5,64 Z" fill="#2ad2d8"/><path d="M905.5,48 L911.5,44 L925.5,44 L925.5,60 L919.5,64 L905.5,64 Z M905.5,48 L919.5,48 L925.5,44 M919.5,48 L919.5,64" fill="none" stroke="#0f5558" stroke-width="2.3" stroke-linejoin="miter"/><path d="M905.5,48 L911.5,44 L925.5,44 L925.5,60 L919.5,64 L905.5,64 Z M905.5,48 L919.5,48 L925.5,44 M919.5,48 L919.5,64" fill="none" stroke="#2cd0d6" stroke-width="0.9" stroke-linejoin="miter"/><path d="M936.5,48 L942.5,44 L956.5,44 L956.5,60 L950.5,64 L936.5,64 Z" fill="#fff"/><path d="M942.5,44 L942.5,60 L956.5,60 M942.5,60 L936.5,64" fill="none" stroke="#0f5558" stroke-width="1.6" stroke-linejoin="miter"/><path d="M942.5,44 L942.5,60 L956.5,60 M942.5,60 L936.5,64" fill="none" stroke="#2cd0d6" stroke-width="0.5" stroke-linejoin="miter"/><path d="M936.5,48 L942.5,44 L956.5,44 L950.5,48 Z" fill="#2ad2d8"/><path d="M936.5,48 L942.5,44 L956.5,44 L956.5,60 L950.5,64 L936.5,64 Z M936.5,48 L950.5,48 L956.5,44 M950.5,48 L950.5,64" fill="none" stroke="#0f5558" stroke-width="2.3" stroke-linejoin="miter"/><path d="M936.5,48 L942.5,44 L956.5,44 L956.5,60 L950.5,64 L936.5,64 Z M936.5,48 L950.5,48 L956.5,44 M950.5,48 L950.5,64" fill="none" stroke="#2cd0d6" stroke-width="0.9" stroke-linejoin="miter"/><path d="M967.5,48 L973.5,44 L987.5,44 L987.5,60 L981.5,64 L967.5,64 Z" fill="#fff"/><path d="M973.5,44 L973.5,60 L987.5,60 M973.5,60 L967.5,64" fill="none" stroke="#0f5558" stroke-width="1.6" stroke-linejoin="miter"/><path d="M973.5,44 L973.5,60 L987.5,60 M973.5,60 L967.5,64" fill="none" stroke="#2cd0d6" stroke-width="0.5" stroke-linejoin="miter"/><path d="M981.5,48 L987.5,44 L987.5,60 L981.5,64 Z" fill="#2ad2d8"/><path d="M967.5,48 L973.5,44 L987.5,44 L987.5,60 L981.5,64 L967.5,64 Z M967.5,48 L981.5,48 L987.5,44 M981.5,48 L981.5,64" fill="none" stroke="#0f5558" stroke-width="2.3" stroke-linejoin="miter"/><path d="M967.5,48 L973.5,44 L987.5,44 L987.5,60 L981.5,64 L967.5,64 Z M967.5,48 L981.5,48 L987.5,44 M981.5,48 L981.5,64" fill="none" stroke="#2cd0d6" stroke-width="0.9" stroke-linejoin="miter"/><path d="M998.5,48 L1004.5,44 L1018.5,44 L1018.5,60 L1012.5,64 L998.5,64 Z" fill="#fff"/><path d="M1004.5,44 L1004.5,60 L1018.5,60 M1004.5,60 L998.5,64" fill="none" stroke="#0f5558" stroke-width="1.6" stroke-linejoin="miter"/><path d="M1004.5,44 L1004.5,60 L1018.5,60 M1004.5,60 L998.5,64" fill="none" stroke="#2cd0d6" stroke-width="0.5" stroke-linejoin="miter"/><path d="M1004.5,44 L1018.5,44 L1018.5,60 L1004.5,60 Z" fill="#2ad2d8"/><path d="M998.5,48 L1004.5,44 L1018.5,44 L1018.5,60 L1012.5,64 L998.5,64 Z M998.5,48 L1012.5,48 L1018.5,44 M1012.5,48 L1012.5,64" fill="none" stroke="#0f5558" stroke-width="2.3" stroke-linejoin="miter"/><path d="M998.5,48 L1004.5,44 L1018.5,44 L1018.5,60 L1012.5,64 L998.5,64 Z M998.5,48 L1012.5,48 L1018.5,44 M1012.5,48 L1012.5,64" fill="none" stroke="#2cd0d6" stroke-width="0.9" stroke-linejoin="miter"/><path d="M1028.5,48 L1034.5,44 L1048.5,44 L1048.5,60 L1042.5,64 L1028.5,64 Z" fill="#fff"/><path d="M1034.5,44 L1034.5,60 L1048.5,60 M1034.5,60 L1028.5,64" fill="none" stroke="#0f5558" stroke-width="1.6" stroke-linejoin="miter"/><path d="M1034.5,44 L1034.5,60 L1048.5,60 M1034.5,60 L1028.5,64" fill="none" stroke="#2cd0d6" stroke-width="0.5" stroke-linejoin="miter"/><path d="M1028.5,64 L1034.5,60 L1048.5,60 L1042.5,64 Z" fill="#2ad2d8"/><path d="M1028.5,48 L1034.5,44 L1048.5,44 L1048.5,60 L1042.5,64 L1028.5,64 Z M1028.5,48 L1042.5,48 L1048.5,44 M1042.5,48 L1042.5,64" fill="none" stroke="#0f5558" stroke-width="2.3" stroke-linejoin="miter"/><path d="M1028.5,48 L1034.5,44 L1048.5,44 L1048.5,60 L1042.5,64 L1028.5,64 Z M1028.5,48 L1042.5,48 L1048.5,44 M1042.5,48 L1042.5,64" fill="none" stroke="#2cd0d6" stroke-width="0.9" stroke-linejoin="miter"/><path d="M1059.5,48 L1065.5,44 L1079.5,44 L1079.5,60 L1073.5,64 L1059.5,64 Z" fill="#fff"/><path d="M1065.5,44 L1065.5,60 L1079.5,60 M1065.5,60 L1059.5,64" fill="none" stroke="#0f5558" stroke-width="1.6" stroke-linejoin="miter"/><path d="M1065.5,44 L1065.5,60 L1079.5,60 M1065.5,60 L1059.5,64" fill="none" stroke="#2cd0d6" stroke-width="0.5" stroke-linejoin="miter"/><path d="M1059.5,48 L1065.5,44 L1065.5,60 L1059.5,64 Z" fill="#2ad2d8"/><path d="M1059.5,48 L1065.5,44 L1079.5,44 L1079.5,60 L1073.5,64 L1059.5,64 Z M1059.5,48 L1073.5,48 L1079.5,44 M1073.5,48 L1073.5,64" fill="none" stroke="#0f5558" stroke-width="2.3" stroke-linejoin="miter"/><path d="M1059.5,48 L1065.5,44 L1079.5,44 L1079.5,60 L1073.5,64 L1059.5,64 Z M1059.5,48 L1073.5,48 L1079.5,44 M1073.5,48 L1073.5,64" fill="none" stroke="#2cd0d6" stroke-width="0.9" stroke-linejoin="miter"/></svg><!--/TB-->
<!-- tab bar -->
<div class="a" style="left:0;top:71px;width:304px;height:40px;background:#f0f0f0"></div>
<div class="a" style="left:2px;top:73px;width:49px;height:21px;border:1px solid #d9d9d9;border-bottom:none;background:#f0f0f0"></div>
<div class="a" style="left:51px;top:72px;width:70px;height:23px;background:#fff;border:1px solid #e3e3e3;border-bottom:none"></div>
<div class="hl" style="left:0;top:94px;width:51px;background:#ababab"></div>
<div class="hl" style="left:121px;top:94px;width:183px;background:#b0b0b0"></div>
<div class="t" style="left:11px;top:80px;font-size:11.5px;letter-spacing:-0.4px">Model</div>
<svg class="a" style="left:62px;top:74px" width="20" height="18" viewBox="0 0 20 18"><path d="M3,3.5 L6,0.5 L15.5,10.5 L12.5,13.5 Z" fill="#2d4f8c" stroke="#1a2f5a" stroke-width="0.9"/><path d="M4.8,2 L14,11.8" stroke="#7f9fdf" stroke-width="1"/><path d="M12.5,13.5 L15.5,10.5 L17.5,15.5 Z" fill="#f4f4f4" stroke="#333" stroke-width="0.8"/></svg>
<div class="t" style="left:84px;top:79px;font-size:11.5px;letter-spacing:-0.5px">Tasks</div>
<div class="t" style="left:125px;top:98px;font-size:11.5px;letter-spacing:-0.6px">Tasks</div>
<svg class="a" style="left:272px;top:97px" width="30" height="11" viewBox="0 0 30 11"><rect x="2.5" y="1.5" width="7" height="8" fill="none" stroke="#999" stroke-width="1"/><path d="M2.5,4.5 h7" stroke="#999"/><rect x="21.5" y="4.5" width="5" height="5" fill="none" stroke="#999"/><path d="M23.5,4.5 v-2 h5 v5 h-2" fill="none" stroke="#999"/></svg>
<div class="hl" style="left:0;top:110px;width:304px;background:#8a8a8a"></div>
<!-- task panel -->
<div class="a" style="left:0;top:111px;width:304px;height:608px;background:linear-gradient(#aaaac2 0px,#8c8cab 60px,#6a6a90 130px,#4a4a78 210px,#37366a 300px,#333263 400px,#333263 608px);border-left:1px solid #8a8a9a"></div>
<div class="a" style="left:304px;top:71px;width:4px;height:648px;background:#f0f0f0"></div>
<!-- 3D view bg -->
<div class="a" style="left:308px;top:71px;width:808px;height:648px;background:linear-gradient(#333366 0%,#9494ac 100%)"></div>
<!--MDL--><svg class="a" style="left:0;top:0" width="1116" height="719" viewBox="0 0 1116 719">
<defs>
<linearGradient id="gBoss" gradientUnits="userSpaceOnUse" x1="659" y1="0" x2="840" y2="0">
<stop offset="0" stop-color="#a8a8a8"/><stop offset="0.6" stop-color="#a2a2a2"/><stop offset="1" stop-color="#7e7e7e"/></linearGradient>
<linearGradient id="gWall" gradientUnits="userSpaceOnUse" x1="444" y1="0" x2="992" y2="0">
<stop offset="0" stop-color="#3a3a3a"/>
<stop offset="0.0219" stop-color="#555555"/>
<stop offset="0.0237" stop-color="#575757"/>
<stop offset="0.055" stop-color="#747474"/>
<stop offset="0.085" stop-color="#868686"/>
<stop offset="0.115" stop-color="#949494"/>
<stop offset="0.145" stop-color="#9d9d9d"/>
<stop offset="0.17" stop-color="#a2a2a2"/>
<stop offset="0.52" stop-color="#a4a4a4"/>
<stop offset="0.67" stop-color="#9c9c9c"/>
<stop offset="0.70" stop-color="#919191"/>
<stop offset="0.79" stop-color="#686868"/>
<stop offset="0.7952" stop-color="#5e5e5e"/>
<stop offset="0.9818" stop-color="#5e5e5e"/>
<stop offset="0.9836" stop-color="#767676"/>
<stop offset="1" stop-color="#2e2e2e"/>
</linearGradient>
<linearGradient id="gBore" gradientUnits="userSpaceOnUse" x1="621" y1="0" x2="866" y2="0">
<stop offset="0" stop-color="#9e9e9e"/><stop offset="0.55" stop-color="#9a9a9a"/><stop offset="0.8" stop-color="#868686"/><stop offset="0.92" stop-color="#666"/><stop offset="1" stop-color="#2e2e2e"/></linearGradient>
<linearGradient id="gNotchL" gradientUnits="userSpaceOnUse" x1="568" y1="0" x2="617" y2="0">
<stop offset="0" stop-color="#a4a4a4"/><stop offset="0.35" stop-color="#9a9a9a"/><stop offset="0.75" stop-color="#727272"/><stop offset="1" stop-color="#383838"/></linearGradient>
<linearGradient id="gNotchR" gradientUnits="userSpaceOnUse" x1="806" y1="0" x2="832" y2="0">
<stop offset="0" stop-color="#333"/><stop offset="0.3" stop-color="#4e4e4e"/><stop offset="0.8" stop-color="#6c6c6c"/><stop offset="1" stop-color="#7a7a7a"/></linearGradient>
<linearGradient id="gHole" x1="0" y1="0" x2="1" y2="0">
<stop offset="0" stop-color="#3a3a3a"/><stop offset="0.25" stop-color="#8a8a8a"/><stop offset="0.5" stop-color="#a4a4a4"/><stop offset="0.75" stop-color="#8a8a8a"/><stop offset="1" stop-color="#3a3a3a"/></linearGradient>
</defs>
<g stroke="none">
<path fill="url(#gBoss)" d="M659,159 L683,153 L714,151 L748,154 L780,161.5 L806,171.5 L829,186 L840,195.5 L840,195.5 L811,182.3 L760,168.7 L727,163.7 L690,161.5 L659,159Z"/>
<path fill="url(#gWall)" d="M444.2,238 L444.5,209.6 L446,201 L448.9,192.9 L452.5,187 L456.7,181.7 L463,175.5 L470,170.6 L476.5,166.3 L483.4,162.8 L491.5,159 L500,156 L510,154 L520,153 L538,152.8 L659,159 L690,161.5 L727,163.7 L760,168.7 L811,182.3 L840,195.5 L840,195.5 L856,208 L875,224.5 L897,247.4 L977.0,337.0 L978.72,339.31 L981.2,342.62 L983.83,346.38 L986.0,350.0 L987.59,353.45 L988.92,357.0 L989.99,360.55 L990.8,364.0 L991.31,367.16 L991.54,370.12 L991.58,373.28 L991.5,377.0 L991.24,381.98 L990.79,387.81 L990.32,393.24 L990,397 L989.0,395.0 L988.1,391.83 L986.94,388.91 L985.55,386.15 L984.0,383.5 L982.02,380.76 L979.69,378.03 L977.51,375.66 L976.0,374.0 L953,350 L873,261.8 L855,246 L833,231 L810,219 L760,206.5 L726,201 L690,199.5 L537.2,190.5 L532.47,190.64 L525.84,190.86 L520.0,191.2 L516.13,191.71 L513.07,192.34 L510.0,193.0 L506.61,193.69 L503.22,194.4 L500.0,195.1 L497.04,195.72 L494.25,196.32 L491.5,197.0 L488.73,197.77 L486.0,198.63 L483.4,199.6 L481.0,200.74 L478.73,202.0 L476.5,203.3 L474.34,204.6 L472.23,205.94 L470.0,207.4 L467.53,208.99 L464.94,210.7 L462.5,212.5 L460.32,214.38 L458.29,216.36 L456.3,218.5 L454.27,220.91 L452.29,223.48 L450.5,226.0 L448.97,228.44 L447.64,230.83 L446.5,233.0 L445.52,235.0 L444.73,236.78 L444.2,238.0Z"/>
<path fill="#999999" d="M444.2,238.0 L444.73,236.78 L445.52,235.0 L446.5,233.0 L447.64,230.83 L448.97,228.44 L450.5,226.0 L452.29,223.48 L454.27,220.91 L456.3,218.5 L458.29,216.36 L460.32,214.38 L462.5,212.5 L464.94,210.7 L467.53,208.99 L470.0,207.4 L472.23,205.94 L474.34,204.6 L476.5,203.3 L478.73,202.0 L481.0,200.74 L483.4,199.6 L486.0,198.63 L488.73,197.77 L491.5,197.0 L494.25,196.32 L497.04,195.72 L500.0,195.1 L503.22,194.4 L506.61,193.69 L510.0,193.0 L513.07,192.34 L516.13,191.71 L520.0,191.2 L525.84,190.86 L532.47,190.64 L537.2,190.5 L690,199.5 L726,201 L760,206.5 L810,219 L833,231 L855,246 L873,261.8 L953,350 L976.0,374.0 L977.51,375.66 L979.69,378.03 L982.02,380.76 L984.0,383.5 L985.55,386.15 L986.94,388.91 L988.1,391.83 L989.0,395.0 L989.62,398.5 L990.0,402.28 L990.12,406.17 L990.0,410.0 L989.6,413.8 L988.94,417.62 L988.05,421.39 L987.0,425.0 L985.83,428.46 L984.5,431.81 L982.92,435.01 L981.0,438.0 L978.62,440.78 L975.88,443.38 L972.94,445.78 L970.0,448.0 L967.02,450.03 L963.94,451.88 L960.88,453.53 L958.0,455.0 L955.12,456.3 L952.25,457.44 L949.75,458.35 L948,459 L700,350 L565,401 L566.8,402 L466.2,292.3 L463.5,289.69 L459.7,286.0 L456.4,282.6 L454.23,280.08 L452.56,277.85 L451.0,275.5 L449.41,272.89 L447.95,270.16 L446.7,267.3 L445.7,264.31 L444.92,261.21 L444.3,258.0 L443.83,254.65 L443.52,251.2 L443.4,247.8 L443.57,244.14 L443.93,240.53 L444.2,238.0Z"/>
<path fill="url(#gNotchL)" d="M508.5,409.8 L526.7,411 L545,409.5 L566,406 L567.6,401.8 L569,309 L588.9,301.6 L602.8,291.6 L612.8,280.5 L617.3,275 L621.4,262 L621.4,247.6 L645,250 L594.3,308.1 L593.6,358.4 L595.22,361.08 L597.55,364.91 L600.0,368.7 L602.49,372.01 L605.11,375.28 L607.5,378.7 L609.57,382.37 L611.41,386.19 L613.0,390.0 L614.33,393.88 L615.4,397.74 L616.2,401.2 L616.76,403.83 L617.05,406.06 L616.9,408.7 L616.23,412.19 L615.13,416.1 L613.7,420.0 L611.9,423.83 L609.77,427.66 L607.5,431.2 L605.24,434.33 L602.84,437.17 L600.0,439.9 L596.41,442.57 L592.37,445.13 L588.5,447.5 L585.15,449.66 L581.96,451.63 L578.5,453.5 L574.52,455.3 L570.27,456.98 L566.0,458.5 L561.84,459.81 L557.66,460.96 L553.4,462.0 L548.96,462.97 L544.43,463.83 L540.0,464.5 L536.04,464.99 L532.19,465.28 L527.5,465.3 L520.65,464.86 L512.96,464.13 L507.5,463.6Z"/>
<path fill="url(#gBore)" d="M621.4,247.6 L640.7,240 L680,229.6 L713,226.3 L745,231.5 L770,236 L804,246.7 L829,263.4 L848.5,283.4 L861,304.3 L865.2,323.5 L864.3,341 L645,250 L621.4,277Z"/>
<path fill="#4a4a4a" d="M508.5,409.8 L458,467.6 L456.3,522.7 L507.5,463.6 L508.5,409.8Z"/>
<path fill="url(#gNotchR)" d="M829.8,598.0 L827.22,596.13 L823.47,593.46 L819.5,590.32 L816.2,587.0 L813.76,583.42 L811.72,579.46 L810.01,575.43 L808.6,571.6 L807.46,568.06 L806.63,564.65 L806.11,561.32 L805.9,558.0 L805.98,554.82 L806.35,551.76 L807.07,548.57 L808.2,545.0 L809.89,540.74 L812.08,536.02 L814.44,531.33 L816.7,527.2 L831.6,543.8Z"/>
<path fill="#999999" d="M456.3,522.7 L779.3,657.7 L829.8,598.0 L827.22,596.13 L823.47,593.46 L819.5,590.32 L816.2,587.0 L813.76,583.42 L811.72,579.46 L810.01,575.43 L808.6,571.6 L807.46,568.06 L806.63,564.65 L806.11,561.32 L805.9,558.0 L805.98,554.82 L806.35,551.76 L807.07,548.57 L808.2,545.0 L809.89,540.74 L812.08,536.02 L814.44,531.33 L816.7,527.2 L818.63,523.81 L820.44,520.86 L822.46,518.16 L825.0,515.5 L828.16,512.79 L831.77,510.16 L835.74,507.69 L840.0,505.5 L844.65,503.61 L849.69,501.96 L854.88,500.54 L860.0,499.3 L865.13,498.27 L870.35,497.46 L875.39,496.82 L880.0,496.3 L883.84,495.87 L887.14,495.56 L890.47,495.42 L894.4,495.5 L899.68,495.93 L905.8,496.65 L911.47,497.39 L915.4,497.9 L966.3,438 L643.5,304 L593.6,358.4 L595.22,361.08 L597.55,364.91 L600.0,368.7 L602.49,372.01 L605.11,375.28 L607.5,378.7 L609.57,382.37 L611.41,386.19 L613.0,390.0 L614.33,393.88 L615.4,397.74 L616.2,401.2 L616.76,403.83 L617.05,406.06 L616.9,408.7 L616.23,412.19 L615.13,416.1 L613.7,420.0 L611.9,423.83 L609.77,427.66 L607.5,431.2 L605.24,434.33 L602.84,437.17 L600.0,439.9 L596.41,442.57 L592.37,445.13 L588.5,447.5 L585.15,449.66 L581.96,451.63 L578.5,453.5 L574.52,455.3 L570.27,456.98 L566.0,458.5 L561.84,459.81 L557.66,460.96 L553.4,462.0 L548.96,462.97 L544.43,463.83 L540.0,464.5 L536.04,464.99 L532.19,465.28 L527.5,465.3 L520.65,464.86 L512.96,464.13 L507.5,463.6Z"/>
<path fill="#8c8c8c" d="M643.5,304 L645,250 L968,384.7 L966.3,438Z"/>
<path fill="#4d4d4d" d="M645,250 L594.3,308.1 L593.6,358.4 L643.5,304Z"/>
</g>
<g fill="none" stroke="#111" stroke-width="1.8" stroke-linejoin="round" stroke-linecap="round">
<path d="M659,159 L683,153 L714,151 L748,154 L780,161.5 L806,171.5 L829,186 L840,195.5 M659,159 L690,161.5 L727,163.7 L760,168.7 L811,182.3 L840,195.5 M444.2,238 L444.5,209.6 L446,201 L448.9,192.9 L452.5,187 L456.7,181.7 L463,175.5 L470,170.6 L476.5,166.3 L483.4,162.8 L491.5,159 L500,156 L510,154 L520,153 L538,152.8 L659,159 M840,195.5 L856,208 L875,224.5 L897,247.4 L977.0,337.0 L978.72,339.31 L981.2,342.62 L983.83,346.38 L986.0,350.0 L987.59,353.45 L988.92,357.0 L989.99,360.55 L990.8,364.0 L991.31,367.16 L991.54,370.12 L991.58,373.28 L991.5,377.0 L991.24,381.98 L990.79,387.81 L990.32,393.24 L990,397 M444.2,238.0 L444.73,236.78 L445.52,235.0 L446.5,233.0 L447.64,230.83 L448.97,228.44 L450.5,226.0 L452.29,223.48 L454.27,220.91 L456.3,218.5 L458.29,216.36 L460.32,214.38 L462.5,212.5 L464.94,210.7 L467.53,208.99 L470.0,207.4 L472.23,205.94 L474.34,204.6 L476.5,203.3 L478.73,202.0 L481.0,200.74 L483.4,199.6 L486.0,198.63 L488.73,197.77 L491.5,197.0 L494.25,196.32 L497.04,195.72 L500.0,195.1 L503.22,194.4 L506.61,193.69 L510.0,193.0 L513.07,192.34 L516.13,191.71 L520.0,191.2 L525.84,190.86 L532.47,190.64 L537.2,190.5 L690,199.5 L726,201 L760,206.5 L810,219 L833,231 L855,246 L873,261.8 L953,350 L976.0,374.0 L977.51,375.66 L979.69,378.03 L982.02,380.76 L984.0,383.5 L985.55,386.15 L986.94,388.91 L988.1,391.83 L989.0,395.0 L989.62,398.5 L990.0,402.28 L990.12,406.17 L990.0,410.0 L989.6,413.8 L988.94,417.62 L988.05,421.39 L987.0,425.0 L985.83,428.46 L984.5,431.81 L982.92,435.01 L981.0,438.0 L978.62,440.78 L975.88,443.38 L972.94,445.78 L970.0,448.0 L967.02,450.03 L963.94,451.88 L960.88,453.53 L958.0,455.0 L955.12,456.3 L952.25,457.44 L949.75,458.35 L948,459 M444.2,238.0 L443.93,240.53 L443.57,244.14 L443.4,247.8 L443.52,251.2 L443.83,254.65 L444.3,258.0 L444.92,261.21 L445.7,264.31 L446.7,267.3 L447.95,270.16 L449.41,272.89 L451.0,275.5 L452.56,277.85 L454.23,280.08 L456.4,282.6 L459.7,286.0 L463.5,289.69 L466.2,292.3 L566.8,402 M621.4,247.6 L640.7,240 L680,229.6 L713,226.3 L745,231.5 L770,236 L804,246.7 L829,263.4 L848.5,283.4 L861,304.3 L865.2,323.5 L864.3,341 M640.7,240 L621.4,247.6 L621.4,262 L617.3,275 L612.8,280.5 L602.8,291.6 L588.9,301.6 L569,309 L567.6,401.8 L566,406 L545,409.5 L526.7,411 L508.5,409.8 M508.5,409.8 L458,467.6 L456.3,522.7 L507.5,463.6 L508.5,409.8 M456.3,522.7 L779.3,657.7 L829.8,598.0 L827.22,596.13 L823.47,593.46 L819.5,590.32 L816.2,587.0 L813.76,583.42 L811.72,579.46 L810.01,575.43 L808.6,571.6 L807.46,568.06 L806.63,564.65 L806.11,561.32 L805.9,558.0 L805.98,554.82 L806.35,551.76 L807.07,548.57 L808.2,545.0 L809.89,540.74 L812.08,536.02 L814.44,531.33 L816.7,527.2 L818.63,523.81 L820.44,520.86 L822.46,518.16 L825.0,515.5 L828.16,512.79 L831.77,510.16 L835.74,507.69 L840.0,505.5 L844.65,503.61 L849.69,501.96 L854.88,500.54 L860.0,499.3 L865.13,498.27 L870.35,497.46 L875.39,496.82 L880.0,496.3 L883.84,495.87 L887.14,495.56 L890.47,495.42 L894.4,495.5 L899.68,495.93 L905.8,496.65 L911.47,497.39 L915.4,497.9 L966.3,438 L643.5,304 L593.6,358.4 L595.22,361.08 L597.55,364.91 L600.0,368.7 L602.49,372.01 L605.11,375.28 L607.5,378.7 L609.57,382.37 L611.41,386.19 L613.0,390.0 L614.33,393.88 L615.4,397.74 L616.2,401.2 L616.76,403.83 L617.05,406.06 L616.9,408.7 L616.23,412.19 L615.13,416.1 L613.7,420.0 L611.9,423.83 L609.77,427.66 L607.5,431.2 L605.24,434.33 L602.84,437.17 L600.0,439.9 L596.41,442.57 L592.37,445.13 L588.5,447.5 L585.15,449.66 L581.96,451.63 L578.5,453.5 L574.52,455.3 L570.27,456.98 L566.0,458.5 L561.84,459.81 L557.66,460.96 L553.4,462.0 L548.96,462.97 L544.43,463.83 L540.0,464.5 L536.04,464.99 L532.19,465.28 L527.5,465.3 L520.65,464.86 L512.96,464.13 L507.5,463.6 L456.3,522.7 M643.5,304 L645,250 L968,384.7 L966.3,438 L643.5,304 M645,250 L594.3,308.1 L593.6,358.4 L643.5,304 M816.7,527.2 L831.6,543.8 L829.8,598 M621.4,247.6 L621.4,277 M456.7,181.7 L456.3,218.5 M538,152.8 L537.2,190.5 M727,163.7 L726.3,201 M811,182.3 L810.3,219 M875,224.5 L873.3,261.8 M977,337 L976,374"/>
</g>
<g stroke="#111" stroke-width="1.8">
<ellipse cx="657" cy="339" rx="19.3" ry="13.3" fill="url(#gHole)"/>
<ellipse cx="915" cy="447" rx="19" ry="13.4" fill="url(#gHole)"/>
<ellipse cx="507" cy="514.6" rx="19.2" ry="13.4" fill="url(#gHole)"/>
<ellipse cx="765.6" cy="622.2" rx="19.2" ry="13.3" fill="url(#gHole)"/>
</g>
<text x="452.6" y="369.7" font-family="Liberation Sans" font-size="31" textLength="211" lengthAdjust="spacingAndGlyphs" fill="#b6b650" fill-opacity="0.82">Mechnexus.com</text>
</svg><!--/MDL-->

<!-- OK / Cancel -->
<div class="btn" style="left:75px;top:129px;width:73px;height:21px;border:2px solid #0078d7"></div>
<div class="t" style="left:104px;top:134.5px;font-size:11.5px;letter-spacing:-0.6px">OK</div>
<div class="btn" style="left:156px;top:129px;width:73px;height:21px"></div>
<div class="t" style="left:175px;top:134.5px;font-size:11.5px;letter-spacing:-0.6px">Cancel</div>
<!-- task box -->
<div class="a" style="left:9px;top:168px;width:286px;height:266px;background:#d6ddf7;border:1px solid #fff;border-radius:5px 5px 0 0"></div>
<div class="a" style="left:10px;top:169px;width:284px;height:24px;background:linear-gradient(90deg,#ffffff 0%,#e4e9fb 50%,#c9d3f4 100%);border-radius:4px 4px 0 0"></div>
<svg class="a" style="left:14px;top:172px" width="18" height="16" viewBox="0 0 18 16"><path d="M1,7 L10,2 L17,5 L17,9 L8,14 L1,11 Z" fill="#3a6cb0" stroke="#1e3e70" stroke-width="0.8"/><path d="M1,7 L8,10 L17,5 M8,10 L8,14" fill="none" stroke="#1e3e70" stroke-width="0.7"/><path d="M1,7 L10,2 L17,5 L8,10 Z" fill="#6f9ad8"/><path d="M6,6.5 L10,4.5 L13,5.8 L9,7.8 Z" fill="#cc2020"/></svg>
<div class="t" style="left:33px;top:175px;font-size:12px;font-weight:bold;color:#2356c0">Pocket parameters</div>
<svg class="a" style="left:275px;top:172px" width="17" height="17" viewBox="0 0 17 17"><circle cx="8.5" cy="8.5" r="7.3" fill="#f8faff" stroke="#9aa8cc" stroke-width="1.2"/><path d="M5,8 L8.5,4.8 L12,8 M5,11.8 L8.5,8.6 L12,11.8" fill="none" stroke="#2a4a9a" stroke-width="1.5"/></svg>
<!-- form -->
<div class="t" style="left:23px;top:212px;letter-spacing:0px">Type</div>
<div class="btn" style="left:138px;top:206px;width:143px;height:20px"></div>
<div class="t" style="left:141px;top:212px;letter-spacing:0px">Up to face</div>
<svg class="a" style="left:266px;top:213px" width="11" height="8" viewBox="0 0 11 8"><path d="M1.5,2 L5.5,6 L9.5,2" fill="none" stroke="#444" stroke-width="1"/></svg>
<div class="t" style="left:23px;top:239px;letter-spacing:0.1px">Offset to face</div>
<div class="a" style="left:138px;top:232px;width:143px;height:22px;background:#fff;border:1px solid #7a7a7a"></div>
<div class="t" style="left:140px;top:239px;letter-spacing:0px">0.00 mm</div>
<svg class="a" style="left:249px;top:232px" width="14" height="14" viewBox="0 0 14 14"><circle cx="7" cy="7" r="5" fill="#e4ebf8" stroke="#7f96c4" stroke-width="1.3"/><text x="7" y="9" font-family="Liberation Sans" font-size="5.5" fill="#4a68a8" text-anchor="middle" font-style="italic">f(x)</text></svg>
<div class="a" style="left:265px;top:234px;width:14px;height:9px;background:#f0f0f0;border:1px solid #d0d0d0"></div>
<div class="a" style="left:265px;top:244px;width:14px;height:9px;background:#f0f0f0;border:1px solid #d0d0d0"></div>
<svg class="a" style="left:265px;top:234px" width="14" height="19" viewBox="0 0 14 19"><path d="M4,6 L7,3 L10,6 Z M4,12.5 L7,15.5 L10,12.5 Z" fill="#111"/></svg>
<div class="btn" style="left:24px;top:261px;width:64px;height:20px"></div>
<div class="t" style="left:28px;top:267px;letter-spacing:0px">Select face</div>
<div class="a" style="left:95px;top:261px;width:186px;height:20px;background:#fff;border:1px solid #7a7a7a"></div>
<div class="t" style="left:97px;top:267px;letter-spacing:0px">Mirrored001:Face12</div>
<div class="cb" style="left:23px;top:290px"></div>
<div class="t" style="left:40px;top:292px;letter-spacing:0px">Reversed</div>
<div class="a" style="left:23px;top:321px;width:258px;height:67px;border:1px solid #b0b4c0;border-radius:3px"></div>
<div class="a" style="left:35px;top:316px;width:48px;height:10px;background:#d6ddf7"></div>
<div class="t" style="left:38px;top:317px;letter-spacing:0px">Direction</div>
<div class="t" style="left:34px;top:339px;letter-spacing:0px">Direction/edge:</div>
<div class="btn" style="left:153px;top:333px;width:116px;height:20px"></div>
<div class="t" style="left:156px;top:338.5px;letter-spacing:-0.2px">Sketch normal</div>
<svg class="a" style="left:254px;top:340px" width="11" height="8" viewBox="0 0 11 8"><path d="M1.5,2 L5.5,6 L9.5,2" fill="none" stroke="#444" stroke-width="1"/></svg>
<div class="cb" style="left:35px;top:361px"></div>
<div class="t" style="left:52px;top:363px;letter-spacing:0px">Show direction</div>
<div class="hl" style="left:23px;top:394px;width:258px;background:#a8a8b0"></div>
<div class="hl" style="left:23px;top:395px;width:258px;background:#ffffff"></div>
<div class="cb" style="left:23px;top:405px"></div>
<svg class="a" style="left:23px;top:405px" width="13" height="13" viewBox="0 0 13 13"><path d="M2.5,6.5 L5,9.5 L10.5,3" fill="none" stroke="#222" stroke-width="1.2"/></svg>
<div class="t" style="left:40px;top:407px;letter-spacing:0px">Update view</div>
</body></html>
